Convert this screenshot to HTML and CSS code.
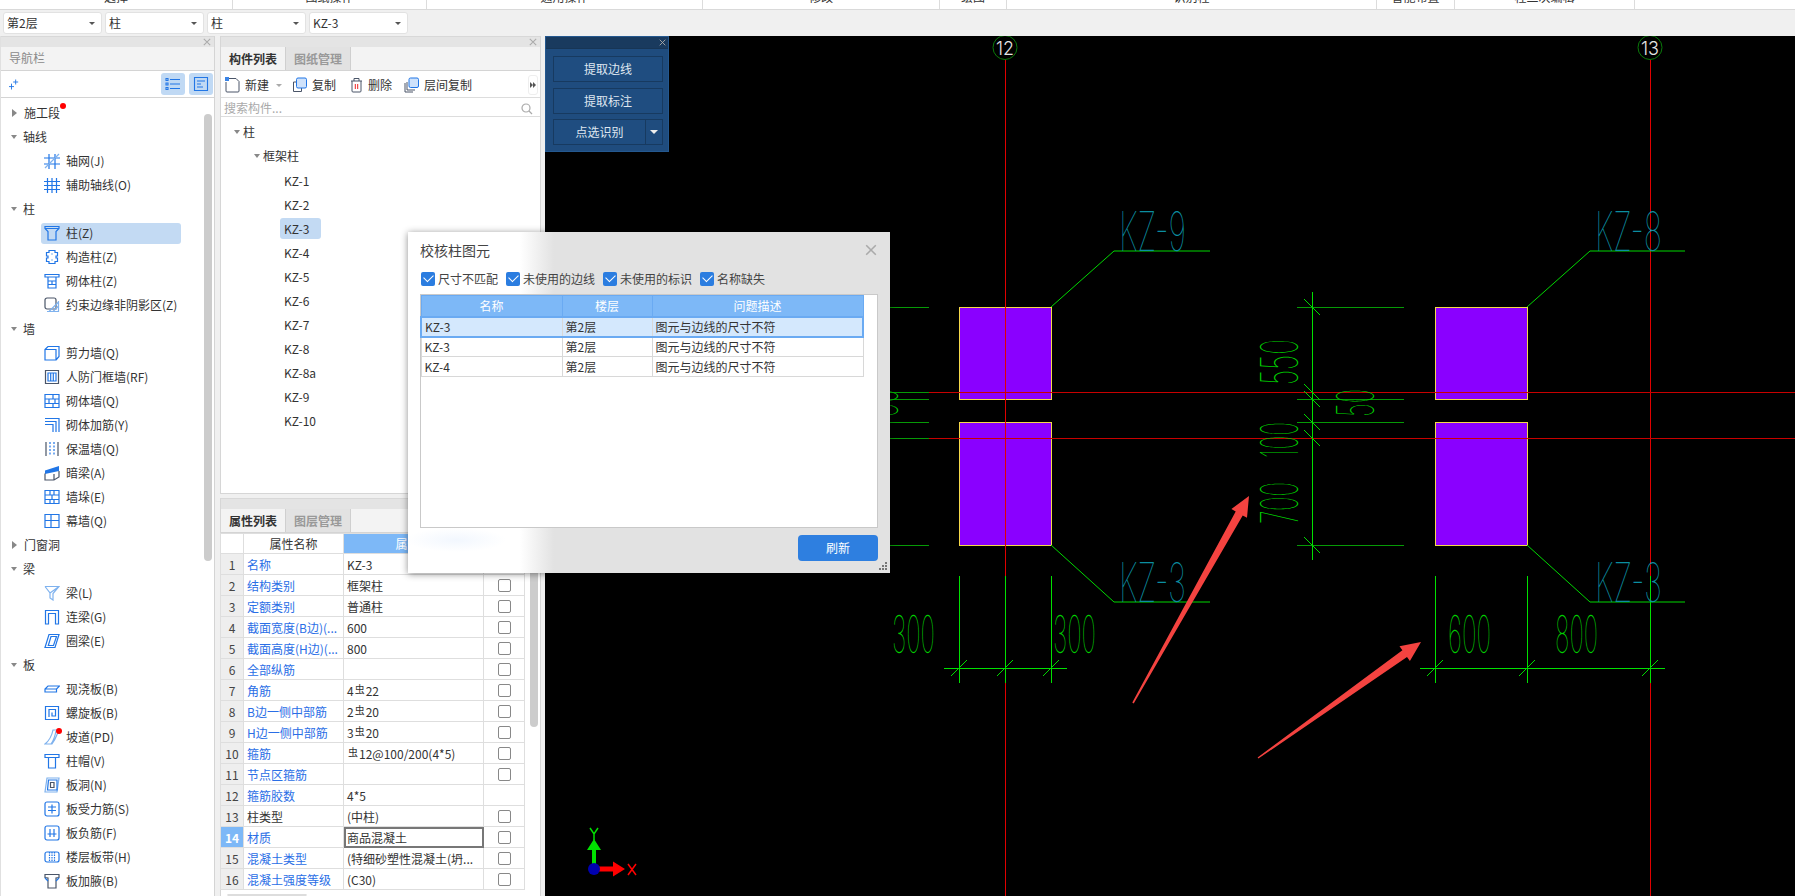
FILE: index.html
```html
<!DOCTYPE html>
<html lang="zh-CN">
<head>
<meta charset="utf-8">
<title>校核柱图元</title>
<link rel="stylesheet" href="styles.css">
</head>
<body>
<svg class="defs" width="0" height="0" aria-hidden="true">
  <symbol id="x" viewBox="0 0 10 10"><path d="M1 1l8 8M9 1l-8 8"/></symbol>
  <symbol id="i-grid" viewBox="0 0 16 16"><path d="M0 5h16M0 11h16M5 1v15M11 1v15"/><path class="pale" d="M1 15L15 1"/></symbol>
  <symbol id="i-aux" viewBox="0 0 16 16"><path d="M0 4.500h16M0 8.500h16M0 12.500h16M3.500 1v15M8 1v15M12.500 1v15"/></symbol>
  <symbol id="i-col" viewBox="0 0 16 16"><path d="M1 1.500h14v2l-3 3V15H4V6.500l-3-3zM1 3.500h14"/></symbol>
  <symbol id="i-gz" viewBox="0 0 16 16"><path d="M5 1.500h6v2h2.500v3.500H12v2h1.500v3.500H11v2H5v-2H2.500V9H4V7H2.500V3.500H5z"/><path class="pale" d="M7 5h2M7 11h2"/></symbol>
  <symbol id="i-brick" viewBox="0 0 16 16"><path d="M1 1.500h14v2.500H1zM4 4v11h8V4M4 8h8M4 11.500h8M8 8v3.500"/></symbol>
  <symbol id="i-edge" viewBox="0 0 16 16"><path class="dark" d="M12 12H3a2 2 0 0 1-2-2V3a2 2 0 0 1 2-2h7a2 2 0 0 1 2 2z"/><path class="pale" d="M3 14.500h11.500V4M5 14.500l9.500-9.500M9 14.500l5.500-5.500"/></symbol>
  <symbol id="i-shear" viewBox="0 0 16 16"><path d="M1 4.500h11v10.500H1zM1 4.500L4 1.500h11v10l-3 3.500"/></symbol>
  <symbol id="i-rf" viewBox="0 0 16 16"><path class="dark" d="M1.500 1.500h13v13h-13z"/><path d="M4 4h8v8H4zM6.700 4v8M9.300 4v8"/></symbol>
  <symbol id="i-wall" viewBox="0 0 16 16"><path d="M1 1.500h14v13H1zM1 6h14M1 10.500h14M9 1.500V6M5 6v4.500M11 6v4.500M9 10.500v4"/></symbol>
  <symbol id="i-bar" viewBox="0 0 16 16"><path d="M1 1.500h14V15M1 4.500h11V15M1 7.500h8V15"/></symbol>
  <symbol id="i-ins" viewBox="0 0 16 16"><path class="dark" d="M2 1v14M14 1v14"/><path d="M6 1v14M10 1v14" stroke-dasharray="2 1.500"/></symbol>
  <symbol id="i-dark" viewBox="0 0 16 16"><path class="fill" d="M1 5.500L15 1v5L1 9z"/><path class="dark" d="M1 8.500V15h9l5-3V6M10 9v6"/></symbol>
  <symbol id="i-duo" viewBox="0 0 16 16"><path d="M1 1.500h14v13H1zM1 6h14M1 10.500h14M6 1.500V6M10 1.500V6M8 6v4.500M6 10.500v4M10 10.500v4"/></symbol>
  <symbol id="i-cur" viewBox="0 0 16 16"><path d="M1 1.500h14v13H1zM1 7.500h14M7 1.500v13"/></symbol>
  <symbol id="i-beam" viewBox="0 0 16 16"><path class="pale" d="M1 1.500h14L9 8.500V15l-3-2V8L1 1.500M6 8L15 1.500"/></symbol>
  <symbol id="i-link" viewBox="0 0 16 16"><path d="M1.500 15V1.500h13V15h-3V4.500h-7V15z"/></symbol>
  <symbol id="i-ring" viewBox="0 0 16 16"><path d="M5 1.500h10L11 14.500H1zM7 3.500h5.500l-3 9H4.300z"/></symbol>
  <symbol id="i-slab" viewBox="0 0 16 16"><path d="M4 5h11.500l-3 3v3H1V8zM1 8h11.500"/></symbol>
  <symbol id="i-spiral" viewBox="0 0 16 16"><path d="M1.500 1.500h13v13h-13zM5 12V4.500h6.500V11H8V7.500"/></symbol>
  <symbol id="i-ramp" viewBox="0 0 16 16"><path class="pale" d="M9 1h6c-2 4-3 9-7 14H1c5-4 7-9 8-14zM12 2c-1 5-2 9-5 13"/></symbol>
  <symbol id="i-cap" viewBox="0 0 16 16"><path d="M1 1.500h14v3h-3.500V15h-7V4.500H1zM1 4.500h14"/></symbol>
  <symbol id="i-hole" viewBox="0 0 16 16"><path class="pale" d="M3 1h12l-2 14H1z"/><path d="M4.500 3h8.500v10H3.500z"/><path class="dark" d="M6.500 5.500h3.500v5H6.500z"/></symbol>
  <symbol id="i-sf" viewBox="0 0 16 16"><rect x="1" y="1" width="14" height="14" rx="2"/><path d="M4 6h8M4 9.500h8M8 3.500v9"/></symbol>
  <symbol id="i-neg" viewBox="0 0 16 16"><rect x="1" y="1" width="14" height="14" rx="2"/><path d="M3.500 9h9M6 4v8M10 4v8"/></symbol>
  <symbol id="i-strip" viewBox="0 0 16 16"><rect x="1" y="3" width="14" height="10" rx="2"/><path d="M5.500 3v10M8 3v10M10.500 3v10" stroke-dasharray="1.500 1"/></symbol>
  <symbol id="i-haunch" viewBox="0 0 16 16"><path class="dark" d="M1 1.500h14v3l-3 .5V15H4V5l-3-.5z"/><path d="M1 5l3 3M15 5l-3 3"/></symbol>
</svg>

<div class="app">
  <div class="ribbon">
    <div class="rg w1"><span>选择</span></div>
    <div class="rg w2"><span>图纸操作</span></div>
    <div class="rg w3"><span>通用操作</span></div>
    <div class="rg w4"><span>修改</span></div>
    <div class="rg w5"><span>绘图</span></div>
    <div class="rg w6"><span>识别柱</span></div>
    <div class="rg w7"><span>智能布置</span></div>
    <div class="rg w8"><span>柱二次编辑</span></div>
  </div>

  <div class="selbar">
    <div class="sel"><span>第2层</span><i class="caret"></i></div>
    <div class="sel"><span>柱</span><i class="caret"></i></div>
    <div class="sel"><span>柱</span><i class="caret"></i></div>
    <div class="sel"><span>KZ-3</span><i class="caret"></i></div>
  </div>

  <div class="main">
    <aside class="nav">
      <div class="grip"><svg class="cl"><use href="#x"/></svg></div>
      <div class="nav-title">导航栏</div>
      <div class="nav-tools">
        <svg class="spark" viewBox="0 0 12 12"><path d="M8 0v6M5 3h6M3 5v7M0 8.500h6"/></svg>
        <span class="tb on"><svg viewBox="0 0 16 16"><path d="M5 3.500h10M5 8h10M5 12.500h10M1 2.500h2v2H1zM1 7h2v2H1zM1 11.500h2v2H1z"/></svg></span>
        <span class="tb on"><svg viewBox="0 0 16 16"><path d="M1.500 1.500h13v13h-13zM4 5h8M4 8h4M4 11h6"/></svg></span>
      </div>
      <div class="list">
        <div class="grp"><i class="tri r"></i><span class="dotted">施工段</span></div>
        <div class="grp"><i class="tri"></i>轴线</div>
        <div class="item"><svg class="ic"><use href="#i-grid"/></svg>轴网(J)</div>
        <div class="item"><svg class="ic"><use href="#i-aux"/></svg>辅助轴线(O)</div>
        <div class="grp"><i class="tri"></i>柱</div>
        <div class="item active"><svg class="ic"><use href="#i-col"/></svg>柱(Z)</div>
        <div class="item"><svg class="ic"><use href="#i-gz"/></svg>构造柱(Z)</div>
        <div class="item"><svg class="ic"><use href="#i-brick"/></svg>砌体柱(Z)</div>
        <div class="item"><svg class="ic"><use href="#i-edge"/></svg>约束边缘非阴影区(Z)</div>
        <div class="grp"><i class="tri"></i>墙</div>
        <div class="item"><svg class="ic"><use href="#i-shear"/></svg>剪力墙(Q)</div>
        <div class="item"><svg class="ic"><use href="#i-rf"/></svg>人防门框墙(RF)</div>
        <div class="item"><svg class="ic"><use href="#i-wall"/></svg>砌体墙(Q)</div>
        <div class="item"><svg class="ic"><use href="#i-bar"/></svg>砌体加筋(Y)</div>
        <div class="item"><svg class="ic"><use href="#i-ins"/></svg>保温墙(Q)</div>
        <div class="item"><svg class="ic"><use href="#i-dark"/></svg>暗梁(A)</div>
        <div class="item"><svg class="ic"><use href="#i-duo"/></svg>墙垛(E)</div>
        <div class="item"><svg class="ic"><use href="#i-cur"/></svg>幕墙(Q)</div>
        <div class="grp"><i class="tri r"></i>门窗洞</div>
        <div class="grp"><i class="tri"></i>梁</div>
        <div class="item"><svg class="ic"><use href="#i-beam"/></svg>梁(L)</div>
        <div class="item"><svg class="ic"><use href="#i-link"/></svg>连梁(G)</div>
        <div class="item"><svg class="ic"><use href="#i-ring"/></svg>圈梁(E)</div>
        <div class="grp"><i class="tri"></i>板</div>
        <div class="item"><svg class="ic"><use href="#i-slab"/></svg>现浇板(B)</div>
        <div class="item"><svg class="ic"><use href="#i-spiral"/></svg>螺旋板(B)</div>
        <div class="item"><svg class="ic"><use href="#i-ramp"/></svg><i class="reddot"></i>坡道(PD)</div>
        <div class="item"><svg class="ic"><use href="#i-cap"/></svg>柱帽(V)</div>
        <div class="item"><svg class="ic"><use href="#i-hole"/></svg>板洞(N)</div>
        <div class="item"><svg class="ic"><use href="#i-sf"/></svg>板受力筋(S)</div>
        <div class="item"><svg class="ic"><use href="#i-neg"/></svg>板负筋(F)</div>
        <div class="item"><svg class="ic"><use href="#i-strip"/></svg>楼层板带(H)</div>
        <div class="item"><svg class="ic"><use href="#i-haunch"/></svg>板加腋(B)</div>
        <div class="vbar"></div>
      </div>
    </aside>

    <section class="mid">
      <div class="part top">
        <div class="grip"><svg class="cl"><use href="#x"/></svg></div>
        <div class="tabs"><span class="tab cur">构件列表</span><span class="tab">图纸管理</span></div>
        <div class="tools">
          <span class="tool"><svg class="ti" viewBox="0 0 15 16"><path class="dk" d="M3 1.500h8l3 3v9.500a1 1 0 0 1-1 1H2a1 1 0 0 1-1-1V5"/><path class="chk" d="M0 0h4v4H0z"/></svg>新建<i class="mini"></i></span>
          <span class="tool"><svg class="ti" viewBox="0 0 15 16"><path class="dk" d="M5 5H1.500v9.500h8V11"/><rect class="lb" x="4.500" y="1" width="10" height="10" rx="1.500"/></svg>复制</span>
          <span class="tool del"><svg class="ti t13" viewBox="0 0 13 16"><path class="dk" d="M1 4h11M4 4V1.500h5V4M2 4v10a1 1 0 0 0 1 1h7a1 1 0 0 0 1-1V4"/><path class="rd" d="M5.300 7v5M7.700 7v5"/></svg>删除</span>
          <span class="tool"><svg class="ti" viewBox="0 0 15 16"><path class="dk" d="M1 6v9h8M3 5v8h8"/><rect class="lb" x="5" y="1" width="9.500" height="9.500" rx="1.500"/></svg>层间复制</span>
          <span class="more"><i></i><i></i></span>
        </div>
        <div class="search"><span>搜索构件...</span><svg viewBox="0 0 12 12"><circle cx="5" cy="5" r="4"/><path d="M8 8l3 3"/></svg></div>
        <div class="tree">
          <div class="n0"><i class="tri"></i>柱</div>
          <div class="n1"><i class="tri"></i>框架柱</div>
          <div class="n2"><span>KZ-1</span></div>
          <div class="n2"><span>KZ-2</span></div>
          <div class="n2"><span class="picked">KZ-3</span></div>
          <div class="n2"><span>KZ-4</span></div>
          <div class="n2"><span>KZ-5</span></div>
          <div class="n2"><span>KZ-6</span></div>
          <div class="n2"><span>KZ-7</span></div>
          <div class="n2"><span>KZ-8</span></div>
          <div class="n2"><span>KZ-8a</span></div>
          <div class="n2"><span>KZ-9</span></div>
          <div class="n2"><span>KZ-10</span></div>
        </div>
      </div>

      <div class="part bottom">
        <div class="grip"></div>
        <div class="tabs t2"><span class="tab cur">属性列表</span><span class="tab">图层管理</span></div>
        <table class="props">
          <colgroup><col class="c0"><col class="c1"><col class="c2"><col class="c3"></colgroup>
          <tr class="head"><th></th><th>属性名称</th><th class="hl">属性值</th><th>附加</th></tr>
          <tr><td class="no">1</td><td class="b">名称</td><td>KZ-3</td><td class="ck"></td></tr>
          <tr><td class="no">2</td><td class="b">结构类别</td><td>框架柱</td><td class="ck"><i></i></td></tr>
          <tr><td class="no">3</td><td class="b">定额类别</td><td>普通柱</td><td class="ck"><i></i></td></tr>
          <tr><td class="no">4</td><td class="b">截面宽度(B边)(...</td><td>600</td><td class="ck"><i></i></td></tr>
          <tr><td class="no">5</td><td class="b">截面高度(H边)(...</td><td>800</td><td class="ck"><i></i></td></tr>
          <tr><td class="no">6</td><td class="b">全部纵筋</td><td></td><td class="ck"><i></i></td></tr>
          <tr><td class="no">7</td><td class="b">角筋</td><td>4<span class="rb">虫</span>22</td><td class="ck"><i></i></td></tr>
          <tr><td class="no">8</td><td class="b">B边一侧中部筋</td><td>2<span class="rb">虫</span>20</td><td class="ck"><i></i></td></tr>
          <tr><td class="no">9</td><td class="b">H边一侧中部筋</td><td>3<span class="rb">虫</span>20</td><td class="ck"><i></i></td></tr>
          <tr><td class="no">10</td><td class="b">箍筋</td><td><span class="rb">虫</span>12@100/200(4*5)</td><td class="ck"><i></i></td></tr>
          <tr><td class="no">11</td><td class="b">节点区箍筋</td><td></td><td class="ck"><i></i></td></tr>
          <tr><td class="no">12</td><td class="b">箍筋胶数</td><td>4*5</td><td class="ck"></td></tr>
          <tr><td class="no">13</td><td>柱类型</td><td>(中柱)</td><td class="ck"><i></i></td></tr>
          <tr><td class="no act">14</td><td class="b">材质</td><td class="edit">商品混凝土</td><td class="ck"><i></i></td></tr>
          <tr><td class="no">15</td><td class="b">混凝土类型</td><td>(特细砂塑性混凝土(坍...</td><td class="ck"><i></i></td></tr>
          <tr><td class="no">16</td><td class="b">混凝土强度等级</td><td>(C30)</td><td class="ck"><i></i></td></tr>
        </table>
        <div class="stub"></div>
        <div class="pbar"></div>
      </div>
    </section>

    <section class="canvas">
      <svg class="cad" viewBox="545 36 1250 860" width="1250" height="860">
        <g class="crisp">
          <g class="stub-l">
            <path d="M821 307.500h108M821 392.500h108M821 399.500h108M821 422.500h108M821 438.500h108M821 545.500h108"/>
            <path d="M1297 307.500h107M1297 392.500h107M1297 399.500h107M1297 422.500h107M1297 438.500h107M1297 545.500h107"/>
          </g>
          <g class="col">
            <rect x="959.500" y="307.500" width="92" height="92"/>
            <rect x="959.500" y="422.500" width="92" height="123"/>
            <rect x="1435.500" y="307.500" width="92" height="92"/>
            <rect x="1435.500" y="422.500" width="92" height="123"/>
          </g>
          <path class="red" d="M1005.500 60v836M1650.500 60v836"/>
          <path class="red2" d="M929 392.500h866M929 438.500h866"/>
          <path class="bright" d="M1312.500 292v268M959.500 576v107M1005.500 576v107M1051.500 576v107M1435.500 576v107M1527.500 576v107M1650.500 576v107M944 668.500h123M1420 668.500h245"/>
        </g>
        <g class="thin">
          <path d="M1304 299l16 16M1304 384l16 16M1304 391l16 16M1304 414l16 16M1304 430l16 16M1304 537l16 16"/>
          <path d="M951 676l16-16M997 676l16-16M1043 676l16-16M1427 676l16-16M1519 676l16-16M1642 676l16-16"/>
          <path d="M1051 307L1114 251H1210M1527 307L1590 251H1685M1051 545L1114 602H1210M1527 545L1590 602H1685"/>
        </g>
        <circle class="axis" cx="1005" cy="47.500" r="12"/>
        <circle class="axis" cx="1650" cy="47.500" r="12"/>
        <text class="axt" x="996" y="55" textLength="18" lengthAdjust="spacingAndGlyphs">12</text>
        <text class="axt" x="1641" y="55" textLength="18" lengthAdjust="spacingAndGlyphs">13</text>

        <text class="kz" x="1119" y="251" textLength="67" lengthAdjust="spacingAndGlyphs">KZ-9</text>
        <text class="kz" x="1595" y="251" textLength="67" lengthAdjust="spacingAndGlyphs">KZ-8</text>
        <text class="kz" x="1119" y="602" textLength="67" lengthAdjust="spacingAndGlyphs">KZ-3</text>
        <text class="kz" x="1595" y="602" textLength="67" lengthAdjust="spacingAndGlyphs">KZ-3</text>

        <text class="dim" x="892" y="653" textLength="43" lengthAdjust="spacingAndGlyphs">300</text>
        <text class="dim" x="1053" y="653" textLength="43" lengthAdjust="spacingAndGlyphs">300</text>
        <text class="dim" x="1448" y="653" textLength="43" lengthAdjust="spacingAndGlyphs">600</text>
        <text class="dim" x="1555" y="653" textLength="43" lengthAdjust="spacingAndGlyphs">800</text>
        <text class="dim" transform="translate(1298 385) rotate(-90)" textLength="46" lengthAdjust="spacingAndGlyphs">550</text>
        <text class="dim" transform="translate(1298 458) rotate(-90)" textLength="36" lengthAdjust="spacingAndGlyphs">100</text>
        <text class="dim" transform="translate(1298 524) rotate(-90)" textLength="42" lengthAdjust="spacingAndGlyphs">700</text>
        <text class="dim" transform="translate(1374 417) rotate(-90)" textLength="28" lengthAdjust="spacingAndGlyphs">50</text>
        <text class="dim" transform="translate(898 417) rotate(-90)" textLength="28" lengthAdjust="spacingAndGlyphs">50</text>

        <polygon class="mark" points="1132.300,702.600 1235.700,511.400 1231.400,509 1249,496 1247,517.800 1242.700,515.400 1133.700,703.400"/>
        <polygon class="mark" points="1257.600,757.400 1402.400,650.300 1399.500,646.300 1421,642 1409.900,660.900 1407,656.900 1258.400,758.600"/>

        <path class="ax-g" d="M592 869v-19h-5l7-11 7 11h-5v19z"/>
        <path class="ax-r" d="M594 866.500h19v-5l12 7.500-12 7.500v-5h-19z"/>
        <circle class="ax-b" cx="594" cy="869" r="6"/>
        <path class="ax-yl" d="M590 828l4 6 4-6M594 834v6"/>
        <path class="ax-xl" d="M628 864l8 11M636 864l-8 11"/>
      </svg>

      <div class="float">
        <div class="f-head"><svg class="f-x"><use href="#x"/></svg></div>
        <div class="f-body">
          <div class="f-btn">提取边线</div>
          <div class="f-btn">提取标注</div>
          <div class="f-split"><div class="f-btn">点选识别</div><div class="f-drop"><i></i></div></div>
        </div>
      </div>
    </section>
  </div>

  <div class="dialog">
    <div class="d-head"><span>校核柱图元</span><svg class="d-x"><use href="#x"/></svg></div>
    <div class="d-checks">
      <label class="chk-item"><i class="box"></i>尺寸不匹配</label>
      <label class="chk-item"><i class="box"></i>未使用的边线</label>
      <label class="chk-item"><i class="box"></i>未使用的标识</label>
      <label class="chk-item"><i class="box"></i>名称缺失</label>
    </div>
    <div class="d-box">
      <table class="issues">
        <colgroup><col class="ic0"><col class="ic1"><col class="ic2"></colgroup>
        <tr class="ih"><th>名称</th><th>楼层</th><th>问题描述</th></tr>
        <tr class="isel"><td>KZ-3</td><td>第2层</td><td>图元与边线的尺寸不符</td></tr>
        <tr><td>KZ-3</td><td>第2层</td><td>图元与边线的尺寸不符</td></tr>
        <tr><td>KZ-4</td><td>第2层</td><td>图元与边线的尺寸不符</td></tr>
      </table>
    </div>
    <div class="d-foot"><button class="refresh">刷新</button></div>
    <svg class="d-grip" viewBox="0 0 8 8"><path d="M6 0h2v2H6zM3 3h2v2H3zM6 3h2v2H6zM0 6h2v2H0zM3 6h2v2H3zM6 6h2v2H6z"/></svg>
  </div>
</div>
</body>
</html>
```
FILE: styles.css
```css
* { box-sizing: border-box; }
html, body { margin: 0; padding: 0; }
body {
  width: 1795px;
  height: 896px;
  overflow: hidden;
  font: 12px/1.2 "Noto Sans CJK SC", "Noto Sans", sans-serif;
  color: #333;
  background: #f0f0f0;
}
i { font-style: normal; display: block; }
.defs { position: absolute; }

symbol path, symbol rect { fill: none; stroke: #2176e6; stroke-width: 1.2; }
symbol .pale { stroke: #7fb2ee; }
symbol .dark { stroke: #4a5568; }
symbol .fill { fill: #2176e6; stroke: none; }
#x path { stroke: #aaa; stroke-width: 1.3; }

.app { position: relative; width: 1795px; height: 896px; display: flex; flex-direction: column; }

/* ribbon remnant */
.ribbon { height: 10px; display: flex; background: #fff; border-bottom: 1px solid #d9d9d9; overflow: hidden; flex: none; }
.rg { height: 9px; border-right: 1px solid #dcdcdc; text-align: center; flex: none; overflow: hidden; }
.rg span { display: block; line-height: 16px; margin-top: -11px; }
.w1 { width: 233px; } .w2 { width: 194px; } .w3 { width: 276px; } .w4 { width: 237px; }
.w5 { width: 67px; } .w6 { width: 370px; } .w7 { width: 78px; } .w8 { width: 180px; }

/* selector bar */
.selbar { height: 26px; flex: none; display: flex; gap: 3px; padding: 2px 0 0 3px; background: #f0f0f0; }
.sel { width: 99px; height: 22px; background: #fff; border: 1px solid #e2e2e2; border-radius: 3px; display: flex; align-items: center; justify-content: space-between; padding: 0 6px 0 3px; }
.caret { width: 0; height: 0; border-left: 3px solid transparent; border-right: 3px solid transparent; border-top: 3px solid #555; }

.main { height: 860px; flex: none; display: flex; }

.grip { height: 11px; background: #e4e4e4; border-top: 1px solid #d8d8d8; position: relative; flex: none; }
.cl { position: absolute; right: 3px; top: 1px; width: 8px; height: 8px; }

/* nav */
.nav { width: 215px; flex: none; background: #fff; border-right: 1px solid #d4d4d4; border-left: 1px solid #e0e0e0; display: flex; flex-direction: column; }
.nav-title { height: 23px; line-height: 22px; padding-left: 8px; background: #f3f3f3; color: #8a8a8a; flex: none; }
.nav-tools { height: 28px; flex: none; display: flex; align-items: center; padding: 0 1px 0 8px; gap: 4px; border-top: 1px solid #d4d4d4; border-bottom: 1px solid #d4d4d4; }
.spark { width: 10px; height: 11px; margin-right: auto; }
.spark path { fill: none; stroke: #2176e6; stroke-width: 1.1; }
.tb { width: 24px; height: 22px; border-radius: 3px; display: flex; align-items: center; justify-content: center; }
.tb.on { background: #c0d9f4; }
.tb svg { width: 16px; height: 16px; }
.tb path { fill: none; stroke: #2176e6; stroke-width: 1.1; }
.list { position: relative; flex: 1; padding-top: 3px; display: flex; flex-direction: column; }
.grp { height: 24px; flex: none; display: flex; align-items: center; padding-left: 10px; }
.tri { width: 0; height: 0; border-left: 3.500px solid transparent; border-right: 3.500px solid transparent; border-top: 4px solid #888; margin-right: 6px; }
.tri.r { border: 0 solid transparent; border-top-width: 4px; border-bottom-width: 4px; border-left: 5px solid #888; margin: 0 7px 0 1px; }
.dotted { position: relative; }
.dotted::after { content: ""; position: absolute; left: 36px; top: -3px; width: 6px; height: 6px; border-radius: 50%; background: #f00; }
.item { position: relative; flex: none; width: 140px; height: 21px; margin: 1.500px 0 1.500px 40px; padding-left: 3px; display: flex; align-items: center; border-radius: 3px; }
.item.active { background: #c3daf3; }
.ic { width: 16px; height: 16px; margin-right: 6px; flex: none; }
.reddot { position: absolute; left: 15px; top: 1px; width: 6px; height: 6px; border-radius: 50%; background: #f00; }
.vbar { position: absolute; left: 203px; top: 16px; width: 8px; height: 447px; border-radius: 4px; background: #ccc; }

.mid { width: 321px; margin-left: 5px; flex: none; display: flex; flex-direction: column; gap: 4px; }
.part { background: #fff; border: 1px solid #d6d6d6; border-top: 0; display: flex; flex-direction: column; position: relative; }
.top { height: 458px; }
.bottom { height: 398px; border-bottom: 0; }
.tabs { height: 24px; flex: none; display: flex; background: #f3f3f3; border-bottom: 1px solid #d4d4d4; }
.tab { width: 65px; text-align: center; line-height: 23px; color: #999; font-weight: 700; background: #e2e2e2; border-right: 1px solid #cfcfcf; }
.tab.cur { color: #333; background: #f3f3f3; }
.tools { height: 27px; flex: none; display: flex; align-items: center; gap: 10px; padding: 2px 2px 0 4px; border-bottom: 1px solid #ddd; }
.tool { display: flex; align-items: center; }
.ti { width: 15px; height: 16px; margin-right: 5px; }
.ti.t13 { width: 13px; }
.del { margin: 0 2px 0 4px; }
.ti path, .ti rect { fill: none; stroke-width: 1; }
.ti .dk { stroke: #4a5568; }
.ti .lb { fill: #cfe2fb; stroke: #2176e6; }
.ti .rd { stroke: #e22; }
.ti .chk { fill: #3a84e6; stroke: none; }
.mini { width: 0; height: 0; margin-left: 7px; border-left: 3px solid transparent; border-right: 3px solid transparent; border-top: 3px solid #aaa; }
.more { margin-left: auto; width: 10px; height: 20px; display: flex; align-items: center; justify-content: center; border: 1px solid #eee; border-radius: 3px; }
.more i { width: 0; height: 0; border-top: 3px solid transparent; border-bottom: 3px solid transparent; border-left: 3px solid #555; }
.search { height: 19px; flex: none; display: flex; align-items: center; justify-content: space-between; padding: 3px 7px 0 3px; color: #aaa; border-bottom: 1px solid #ddd; }
.search svg { width: 12px; height: 12px; }
.search circle, .search path { fill: none; stroke: #aaa; stroke-width: 1.2; }
.tree { padding-top: 3px; flex: 1; }
.n0, .n1, .n2 { height: 24px; display: flex; align-items: center; }
.n0 { padding-left: 13px; }
.n1 { padding-left: 33px; }
.n2 { padding-left: 59px; }
.tree .tri { margin-right: 3px; }
.n2 span { height: 21px; line-height: 21px; padding: 0 4px; width: 41px; border-radius: 3px; }
.picked { background: #c3daf3; }

/* properties table */
.props { width: 304px; margin-left: -1px; table-layout: fixed; border-collapse: collapse; flex: none; }
.c0 { width: 23px; } .c1 { width: 100px; } .c2 { width: 140px; } .c3 { width: 41px; }
.props th, .props td { height: 21px; padding: 0 3px; border: 1px solid #dedede; font-weight: 400; white-space: nowrap; overflow: hidden; text-overflow: clip; line-height: 17px; }
.props .head th { height: 20px; text-align: center; }
.props .hl { background: #7db8f7; color: #fff; }
.no { background: #eee; text-align: center; color: #444; padding: 0 !important; }
.no.act { background: #7db8f7; color: #fff; font-weight: 700; }
.b { color: #2a6ee6; }
.edit { outline: 2px solid #777; outline-offset: -2px; }
.rb { font-size: 10px; line-height: 0; position: relative; top: -3px; margin: 0 1px; }
.ck i { width: 13px; height: 13px; margin: 0 auto; border: 1px solid #888; border-radius: 2px; background: #fff; }
.stub { width: 80px; height: 10px; margin: 4px 0 0 6px; border: 1px solid #ddd; border-radius: 4px; }
.pbar { position: absolute; left: 309px; top: 37px; width: 8px; height: 192px; border-radius: 4px; background: #ccc; }

/* canvas */
.canvas { position: relative; width: 1250px; margin-left: 4px; flex: none; background: #000; overflow: hidden; }
.cad { display: block; }
.crisp { shape-rendering: crispEdges; }
.stub-l path { stroke: #069a06; stroke-width: 1.5; fill: none; }
.col rect { fill: #8a00ff; stroke: #f5d84a; stroke-width: 1; }
.red { stroke: #e00000; fill: none; }
.red2 { stroke: #c80000; fill: none; }
.bright { stroke: #00e000; fill: none; }
.thin path { stroke: #00d800; stroke-width: 1; fill: none; }
.axis { fill: none; stroke: #0a7a0a; stroke-width: 1; }
.axt { font: 300 19px Inter, sans-serif; fill: #e4e4e4; }
.kz { font: 100 54px Inter, sans-serif; fill: #0b8ea0; }
.dim { font: 100 52px Inter, sans-serif; fill: #00d000; }
.mark { fill: #f44340; }
.ax-g { fill: #00e000; }
.ax-r { fill: #f00; }
.ax-b { fill: #0000b0; }
.ax-yl { fill: none; stroke: #00e000; stroke-width: 1.5; }
.ax-xl { fill: none; stroke: #f00; stroke-width: 1.5; }

/* floating extraction panel */
.float { position: absolute; left: 0; top: 0; width: 124px; height: 116px; background: #1f4c7e; border: 1px solid #24588f; }
.f-head { height: 12px; background: #193a5e; position: relative; border-bottom: 1px solid #173555; }
.f-x { position: absolute; right: 2px; top: 2px; width: 7px; height: 7px; }
.f-body { padding: 7px 5px 0 7px; display: flex; flex-direction: column; gap: 6px; }
.f-btn { height: 26px; line-height: 24px; text-align: center; color: #dfe7f0; background: #1f4d80; border: 1px solid #173a60; flex: 1; }
.f-split { display: flex; margin-top: -1px; }
.f-drop { width: 17px; height: 26px; border: 1px solid #173a60; border-left: 0; display: flex; align-items: center; justify-content: center; }
.f-drop i { width: 0; height: 0; border-left: 4px solid transparent; border-right: 4px solid transparent; border-top: 4px solid #eee; }

/* dialog */
.dialog {
  position: absolute;
  left: 408px;
  top: 232px;
  width: 482px;
  height: 341px;
  display: flex;
  flex-direction: column;
  padding: 0 12px;
  background:
    radial-gradient(ellipse 50px 12px at 48px 308px, rgba(190, 215, 250, .2), rgba(255, 255, 255, 0)),
    linear-gradient(to right, #fff 112px, #e2e2e2 146px);
  box-shadow: 0 1px 7px rgba(0, 0, 0, .45);
}
.d-head { height: 38px; flex: none; display: flex; align-items: center; justify-content: space-between; padding-bottom: 2px; font-size: 14px; color: #444; }
.d-x { width: 12px; height: 12px; margin-right: 1px; }
.d-x path { stroke: #888; }
.d-checks { height: 18px; flex: none; display: flex; gap: 8px; padding-left: 1px; margin-bottom: 6px; color: #444; }
.chk-item { display: flex; align-items: center; }
.box { position: relative; width: 14px; height: 14px; margin-right: 3px; border-radius: 2px; background: #2b7de0; }
.box::after { content: ""; position: absolute; left: 3px; top: 2px; width: 8px; height: 5px; border-left: 1.500px solid #fff; border-bottom: 1.500px solid #fff; transform: rotate(-45deg); }
.d-box { height: 234px; flex: none; background: #fff; border: 1px solid #c9c9c9; }
.issues { width: 442px; table-layout: fixed; border-collapse: collapse; margin-left: -1px; }
.ic0 { width: 141px; } .ic1 { width: 90px; } .ic2 { width: 211px; }
.issues th, .issues td { height: 20px; padding: 0 3px; border: 1px solid #d8d8d8; font-weight: 400; line-height: 18px; }
.ih th { height: 21px; background: #7db8f7; color: #fff; border-color: #6aaaf2; text-align: center; }
.isel td { background: #d4e8fd; border-top: 2px solid #6aaaf2; border-bottom: 2px solid #6aaaf2; border-left-color: #d8d8d8; }
.isel td:first-child { border-left: 2px solid #6aaaf2; }
.isel td:last-child { border-right: 2px solid #6aaaf2; }
.d-foot { margin-top: 7px; display: flex; justify-content: flex-end; }
.refresh { width: 80px; height: 26px; border: 0; border-radius: 4px; background: #2e7fe0; color: #fff; font: inherit; padding: 0; }
.d-grip { position: absolute; right: 3px; bottom: 3px; width: 8px; height: 8px; }
.d-grip path { fill: #777; }
```
